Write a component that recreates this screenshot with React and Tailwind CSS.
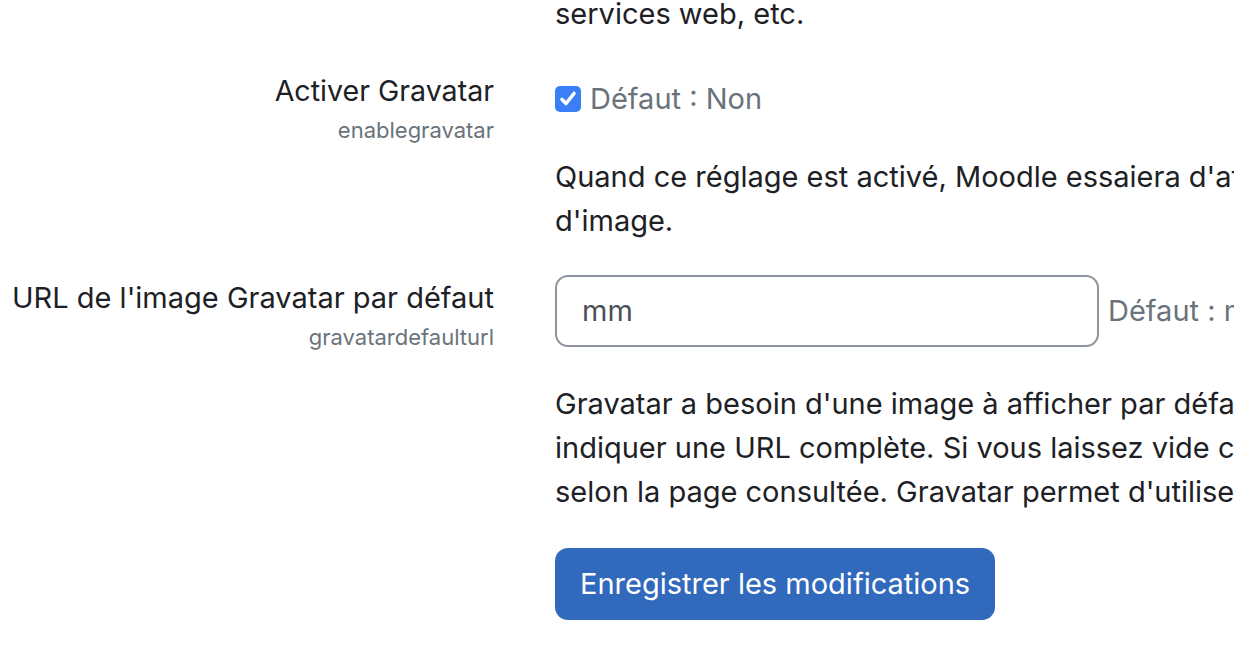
export default function App() {
  const font = { fontFamily: "Inter, 'Noto Sans', sans-serif" };
  return (
    <div className="w-[1234px] h-[670px] overflow-hidden bg-white text-[#1d2125]" style={font}>
      <div className="grid grid-cols-[494px_1000px] gap-x-[61px] text-[29px] leading-[44px]">
        {/* top trailing text */}
        <div />
        <div className="-mt-[8px] whitespace-nowrap">services web, etc.</div>

        {/* Activer Gravatar */}
        <div className="mt-[33px] text-right">
          <div className="text-[28.6px]">Activer Gravatar</div>
          <div className="text-[22px] leading-[34px] text-[#6a737b]">enablegravatar</div>
        </div>
        <div className="mt-[41px]">
          <div className="flex items-center h-[44px]">
            <span className="w-[26px] h-[26px] rounded-[5px] bg-[#3a7ff6] flex items-center justify-center mr-[9px]">
              <svg width="20" height="18" viewBox="0 0 20 18">
                <path d="M4 9.5 L8 13.5 L16 3.5" stroke="white" strokeWidth="3.6" fill="none" strokeLinecap="round" strokeLinejoin="round" />
              </svg>
            </span>
            <span className="text-[#6a737b]">Défaut : Non</span>
          </div>
          <div className="mt-[34px] whitespace-nowrap">
            <div>Quand ce réglage est activé, Moodle essaiera d'afficher la photo de l'utilisateur depuis Gravatar s'il n'a pas</div>
            <div>d'image.</div>
          </div>
        </div>

        {/* URL de l'image Gravatar par défaut */}
        <div className="mt-[33px] text-right">
          <div className="text-[29px]">URL de l'image Gravatar par défaut</div>
          <div className="text-[22px] leading-[34px] text-[#6a737b]">gravatardefaulturl</div>
        </div>
        <div className="mt-[32px]">
          <div className="flex items-center">
            <div className="w-[544px] h-[72px] rounded-[13px] border-2 border-[#8f959e] flex items-center pl-[25px] text-[#495057]">
              mm
            </div>
            <span className="ml-[9px] text-[#6a737b] whitespace-nowrap">Défaut : mm</span>
          </div>
          <div className="mt-[35px] whitespace-nowrap">
            <div>Gravatar a besoin d'une image à afficher par défaut si un utilisateur n'a pas d'image Gravatar. Vous pouvez</div>
            <div>indiquer une URL complète. Si vous laissez vide ce champ, Moodle utilisera l'image par défaut la plus appropriée</div>
            <div>selon la page consultée. Gravatar permet d'utiliser aussi des images générées automatiquement.</div>
          </div>
          <button className="mt-[34px] h-[72px] px-[25px] rounded-[13px] bg-[#3169bd] text-white text-[29px]">
            Enregistrer les modifications
          </button>
        </div>
      </div>
    </div>
  );
}
